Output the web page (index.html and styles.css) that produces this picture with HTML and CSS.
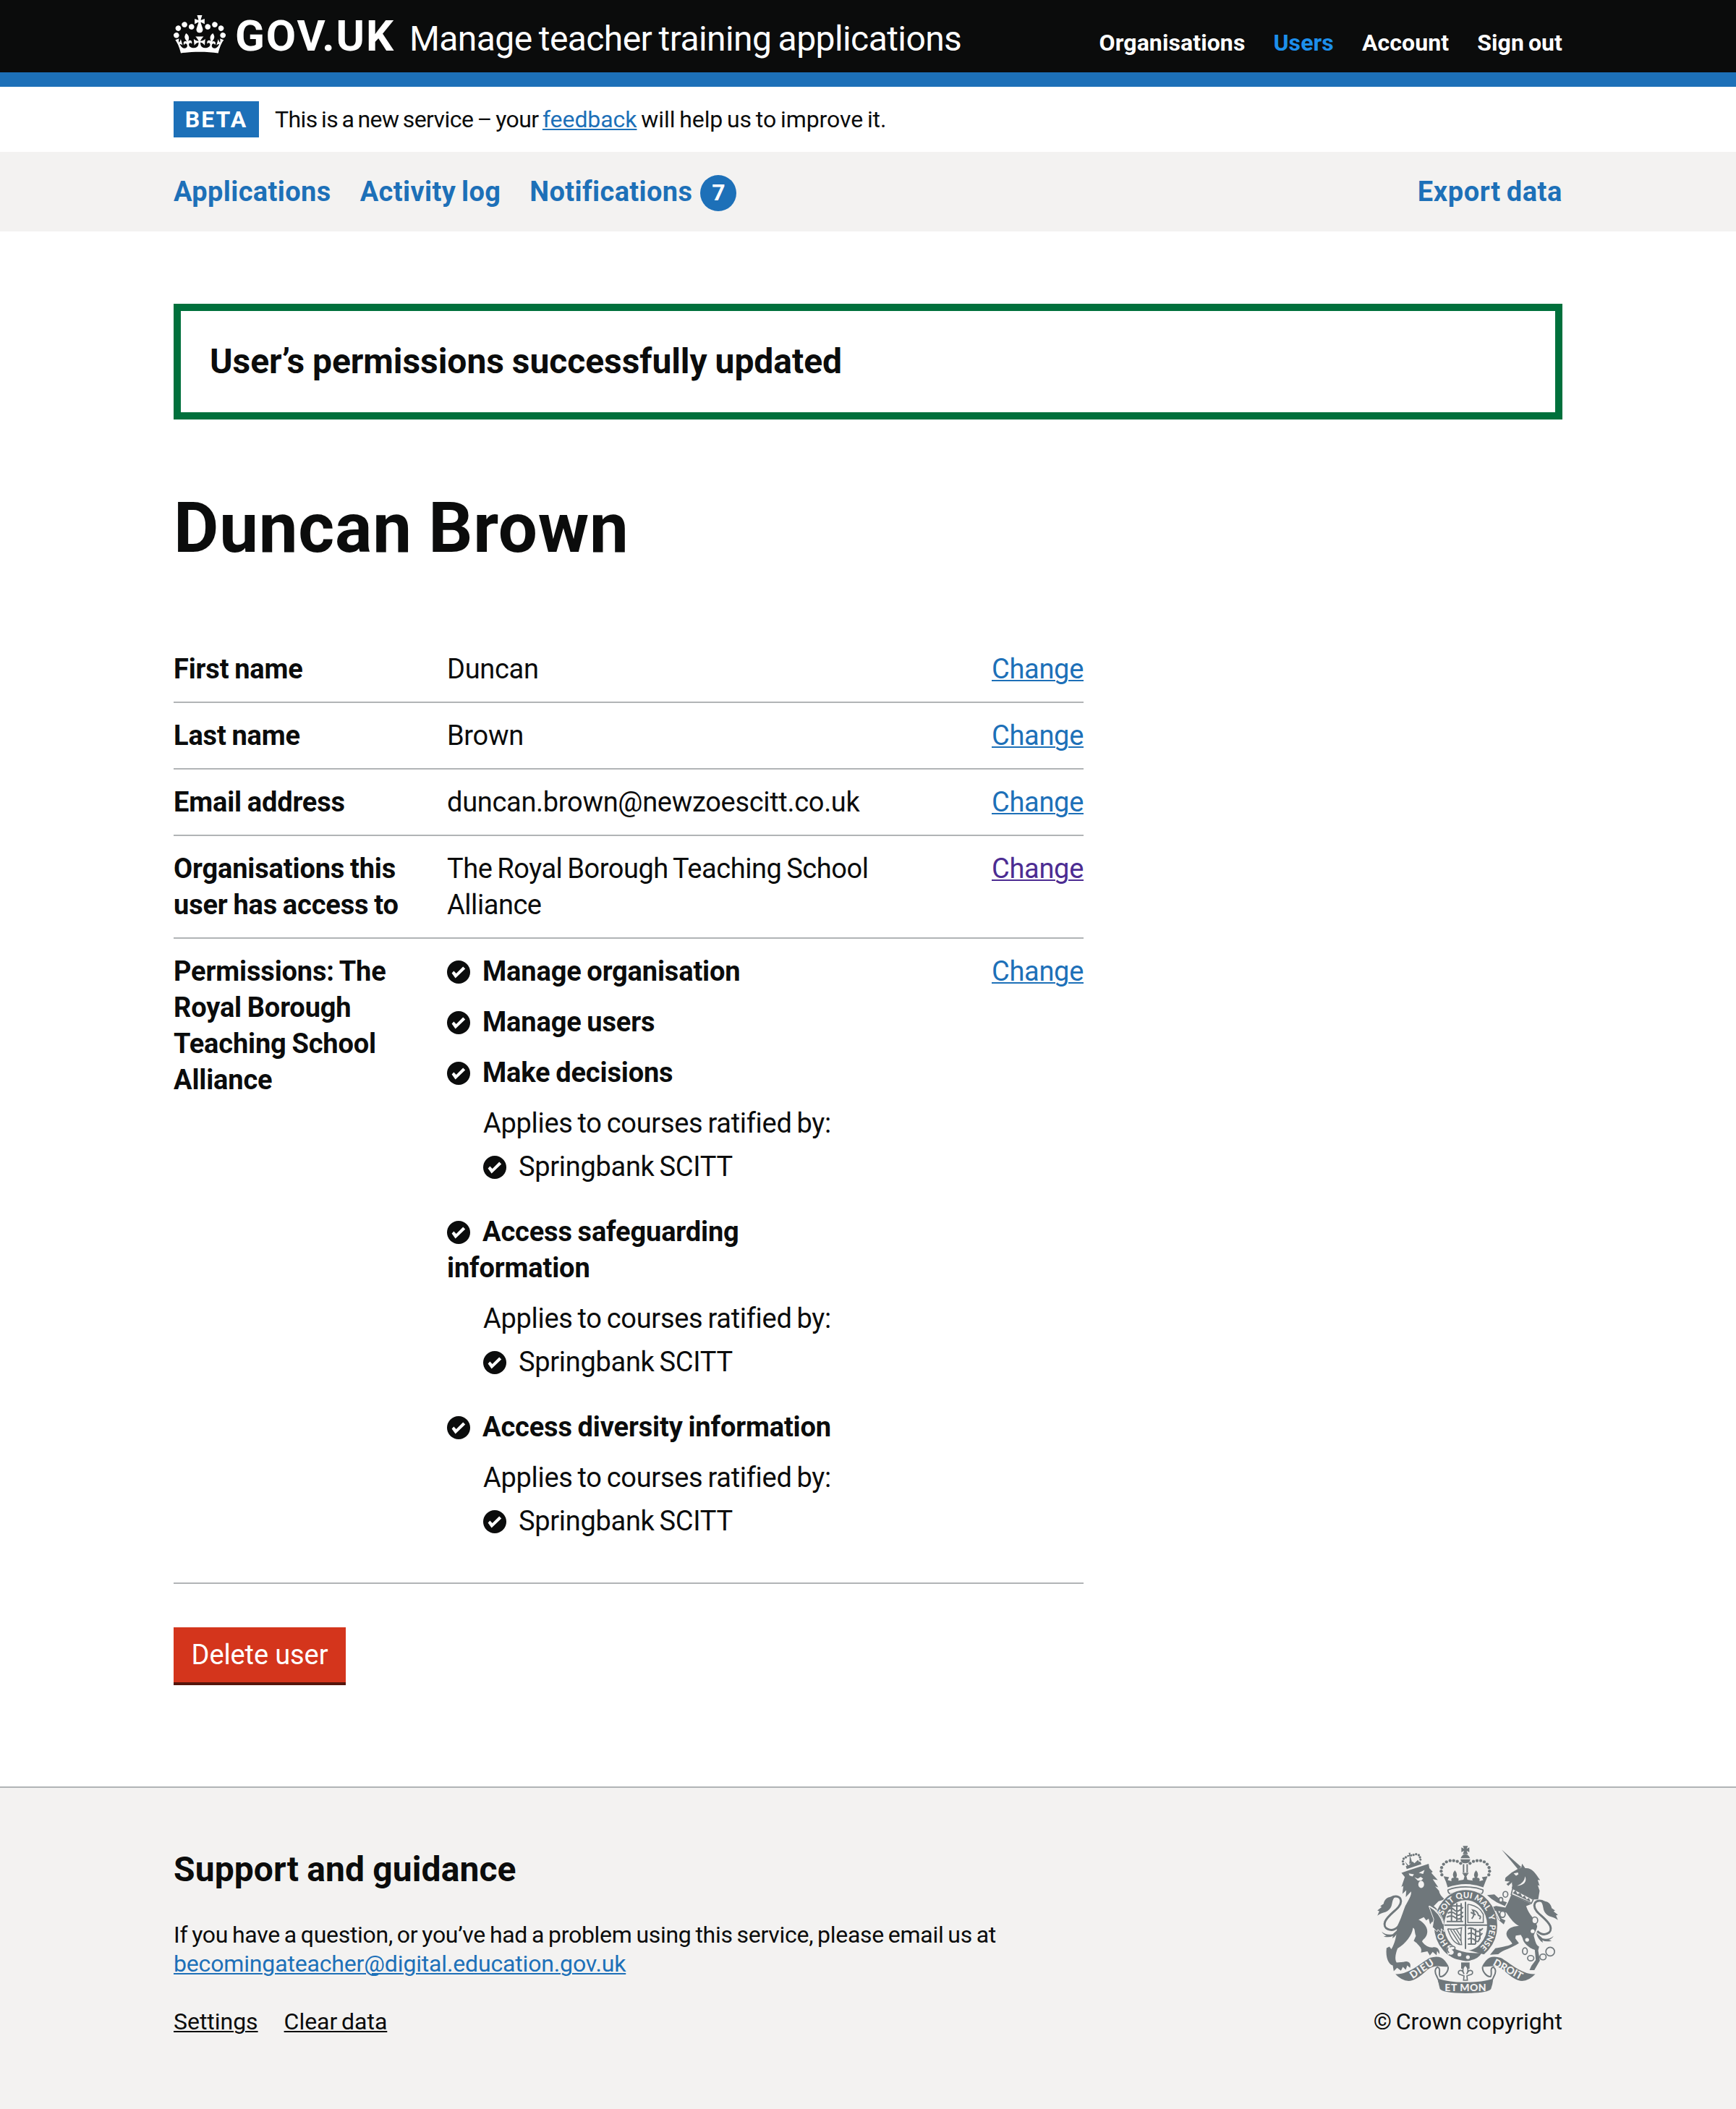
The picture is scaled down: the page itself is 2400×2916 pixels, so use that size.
FILE: index.html
```html
<!DOCTYPE html>
<html lang="en">
<head>
<meta charset="utf-8">
<title>Duncan Brown - Manage teacher training applications - GOV.UK</title>
<link rel="stylesheet" href="styles.css">
</head>
<body>
<svg class="sprite" aria-hidden="true">
  <symbol id="tick" viewBox="0 0 32 32">
    <circle cx="16" cy="16" r="16" fill="#0b0c0c"/>
    <path d="M6.6 17.4 9.4 14.4 12.7 18 22.2 8.6 25.2 11.6 11.6 24.4Z" fill="#fff"/>
  </symbol>
</svg>

<header class="header">
  <div class="container header__inner">
    <div class="header__brand">
      <svg class="header__crown" viewBox="0 0 132 97" aria-hidden="true"><path fill="currentColor" fill-rule="evenodd" d="M25 30.2c3.5 1.5 7.7-.2 9.1-3.7 1.5-3.6-.2-7.8-3.9-9.2-3.6-1.4-7.6.3-9.1 3.9-1.4 3.5.3 7.5 3.9 9zM9 39.5c3.6 1.5 7.8-.2 9.2-3.7 1.5-3.6-.2-7.8-3.9-9.1-3.6-1.5-7.6.2-9.1 3.8-1.4 3.5.3 7.5 3.8 9zM4.4 57.2c3.5 1.5 7.7-.2 9.1-3.8 1.5-3.6-.2-7.7-3.9-9.1-3.5-1.5-7.6.3-9.1 3.8-1.4 3.5.3 7.6 3.9 9.1zm38.3-21.4c3.5 1.5 7.7-.2 9.1-3.8 1.5-3.6-.2-7.7-3.9-9.1-3.6-1.5-7.6.3-9.1 3.8-1.3 3.6.4 7.7 3.9 9.1zm64.4-5.6c-3.6 1.5-7.8-.2-9.1-3.7-1.5-3.6.2-7.8 3.8-9.2 3.6-1.4 7.7.3 9.2 3.9 1.3 3.5-.4 7.5-3.9 9zm15.9 9.3c-3.6 1.5-7.7-.2-9.1-3.7-1.5-3.6.2-7.8 3.7-9.1 3.6-1.5 7.7.2 9.2 3.8 1.5 3.5-.3 7.5-3.8 9zm4.7 17.7c-3.6 1.5-7.8-.2-9.2-3.8-1.5-3.6.2-7.7 3.9-9.1 3.6-1.5 7.7.3 9.2 3.8 1.3 3.5-.4 7.6-3.9 9.1zM89.3 35.8c-3.6 1.5-7.8-.2-9.2-3.8-1.4-3.6.2-7.7 3.9-9.1 3.6-1.5 7.7.3 9.2 3.8 1.4 3.6-.3 7.7-3.9 9.1zM69.7 17.7l8.9 4.7V9.3l-8.9 2.8c-.2-.3-.5-.6-.9-.9L72.4 0H59.6l3.5 11.2c-.3.3-.6.5-.9.9l-8.8-2.8v13.1l8.8-4.7c.3.3.6.7.9.9l-5 15.4v.1c-.2.8-.4 1.6-.4 2.4 0 4.1 3.1 7.5 7 8.1h.2c.3 0 .7.1 1 .1.4 0 .7 0 1-.1h.2c4-.6 7.1-4.1 7.1-8.1 0-.8-.1-1.7-.4-2.4V34l-5.1-15.4c.4-.2.7-.6 1-.9zM66 92.8c16.9 0 32.8 1.1 47.1 3.2 4-16.9 8.9-26.7 14-33.5l-9.6-3.4c1 4.9 1.1 7.2 0 10.2-1.5-1.4-3-4.3-4.2-8.7L108.6 76c2.8-2 5-3.2 7.5-3.3-4.4 9.4-10 11.9-13.6 11.2-4.3-.8-6.3-4.6-5.6-7.9 1-4.7 5.7-5.9 8-.5 4.3-8.7-3-11.4-7.6-8.8 7.1-7.2 7.9-13.5 2.1-21.1-8 6.1-8.1 12.3-4.5 20.8-4.7-5.4-12.1-2.5-9.5 6.2 3.4-5.2 7.9-2 7.2 3.1-.6 4.3-6.4 7.8-13.5 7.2-10.3-.9-10.9-8-11.2-13.8 2.5-.5 7.1 1.8 11 7.3L80.2 60c-4.1 4.4-8 5.3-12.3 5.4 1.4-4.4 8-11.6 8-11.6H55.5s6.4 7.2 7.9 11.6c-4.2-.1-8-1-12.3-5.4l1.4 16.4c3.9-5.5 8.5-7.7 10.9-7.3-.3 5.8-.9 12.8-11.1 13.8-7.2.6-12.9-2.9-13.5-7.2-.7-5 3.8-8.3 7.1-3.1 2.7-8.7-4.6-11.6-9.4-6.2 3.7-8.5 3.6-14.7-4.6-20.8-5.8 7.6-5 13.9 2.2 21.1-4.7-2.6-11.9.1-7.7 8.8 2.3-5.5 7.1-4.2 8.1.5.7 3.3-1.3 7.1-5.7 7.9-3.5.7-9-1.8-13.5-11.2 2.5.1 4.7 1.3 7.5 3.3l-4.7-15.4c-1.2 4.4-2.7 7.2-4.3 8.7-1.1-3-.9-5.3 0-10.2l-9.5 3.4c5 6.9 9.9 16.7 14 33.5 14.8-2.1 30.8-3.2 47.7-3.2z"/></svg>
      <a class="header__logotype" href="#">GOV.UK</a>
      <a class="header__service" href="#">Manage teacher training applications</a>
    </div>
    <nav class="header__nav">
      <a href="#">Organisations</a>
      <a class="is-current" href="#">Users</a>
      <a href="#">Account</a>
      <a href="#">Sign out</a>
    </nav>
  </div>
</header>

<div class="container phase">
  <strong class="phase__tag">BETA</strong>
  <span class="phase__text"><span class="phase__lead">This is a new service – your </span><a class="link" href="#">feedback</a> will help us to improve it.</span>
</div>

<nav class="subnav">
  <div class="container subnav__inner">
    <a href="#">Applications</a>
    <a href="#">Activity log</a>
    <a class="subnav__notify" href="#">Notifications <span class="badge">7</span></a>
    <a class="subnav__end" href="#">Export data</a>
  </div>
</nav>

<main class="container main">
  <div class="success"><h2>User’s permissions successfully updated</h2></div>
  <h1>Duncan Brown</h1>

  <dl class="summary">
    <div class="summary__row"><dt>First name</dt><dd>Duncan</dd><dd class="summary__action"><a class="link" href="#">Change</a></dd></div>
    <div class="summary__row"><dt>Last name</dt><dd>Brown</dd><dd class="summary__action"><a class="link" href="#">Change</a></dd></div>
    <div class="summary__row"><dt>Email address</dt><dd>duncan.brown@newzoescitt.co.uk</dd><dd class="summary__action"><a class="link" href="#">Change</a></dd></div>
    <div class="summary__row"><dt>Organisations this<br>user has access to</dt><dd class="summary__org">The Royal Borough Teaching School Alliance</dd><dd class="summary__action"><a class="link link--visited" href="#">Change</a></dd></div>
    <div class="summary__row">
      <dt>Permissions: The Royal Borough Teaching School Alliance</dt>
      <dd>
        <ul class="perms">
          <li><svg class="tick"><use href="#tick"/></svg><b>Manage organisation</b></li>
          <li><svg class="tick"><use href="#tick"/></svg><b>Manage users</b></li>
          <li><svg class="tick"><use href="#tick"/></svg><b>Make decisions</b>
            <div class="perms__detail"><p>Applies to courses ratified by:</p><p><svg class="tick"><use href="#tick"/></svg>Springbank SCITT</p></div></li>
          <li><svg class="tick"><use href="#tick"/></svg><b>Access safeguarding<br>information</b>
            <div class="perms__detail"><p>Applies to courses ratified by:</p><p><svg class="tick"><use href="#tick"/></svg>Springbank SCITT</p></div></li>
          <li><svg class="tick"><use href="#tick"/></svg><b>Access diversity information</b>
            <div class="perms__detail"><p>Applies to courses ratified by:</p><p><svg class="tick"><use href="#tick"/></svg>Springbank SCITT</p></div></li>
        </ul>
      </dd>
      <dd class="summary__action"><a class="link" href="#">Change</a></dd>
    </div>
  </dl>

  <button class="button" type="button">Delete user</button>
</main>

<footer class="footer">
  <div class="container footer__inner">
    <div class="footer__text">
      <h2>Support and guidance</h2>
      <p>If you have a question, or you’ve had a problem using this service, please email us at<br><a class="link footer__email" href="#">becomingateacher@digital.education.gov.uk</a></p>
      <div class="footer__links"><a href="#">Settings</a><a href="#">Clear data</a></div>
    </div>
    <div class="footer__copyright">
      <svg class="crest" viewBox="132 95 750 613" aria-hidden="true">
        <defs>
          <path id="garter" d="M399 425A100 113 0 0 1 599 425A100 113 0 0 1 399 425"/>
          <g id="tail">
            <path class="ln8" d="M218 432C190 458 152 440 164 410C182 374 230 356 230 325C228 302 204 302 188 312"/>
            <path d="M204 308C180 302 160 316 158 336L144 346 150 350 132 364 140 367 132 386C148 370 172 376 186 354 196 340 190 324 204 308Z"/>
            <path d="M150 452Q168 468 196 462L222 438Q216 466 194 480L197 470Q180 478 158 472L170 468Q156 464 150 452Z"/>
          </g>
          <g id="scroll">
            <path d="M207 628C262 632 312 582 350 561Q392 548 412 572 426 590 428 598L400 597Q368 590 340 610 292 656 262 657 232 655 207 628Z"/>
            <path class="ln5" d="M384 598C368 606 370 624 380 640Q388 654 388 664M384 600C398 606 384 626 392 638 406 642 428 620 426 598"/>
          </g>
        </defs>
        <g class="ink">
          <!-- lion -->
          <path d="M232 208 262 197 345 170 348 188 362 203 356 208 383 238 362 234 385 268 372 264 388 282C390 296 398 306 412 318L386 326 366 346C386 362 404 385 408 425L409 450 397 438 398 456 384 441 380 452 361 433 372 425 360 410 351 422 345 398 335 405 325 392 303 402C325 412 346 438 338 462 332 482 318 484 318 494 330 510 345 518 360 518 380 512 392 525 390 546L380 532 378 550 362 536 350 551 340 534 313 539C320 520 305 512 296 500L283 490 292 470C285 450 290 440 280 436 275 470 250 500 216 522 205 550 205 570 212 580L240 578C260 570 274 582 268 602L256 592 250 610 238 598 230 614 214 602 200 616 196 592C180 590 165 560 170 520L182 514 190 525C205 500 212 470 214 430 230 400 238 370 248 345 262 320 275 300 272 285L250 308 252 280 236 295 240 262 232 266 246 225Z"/>
          <path d="M250 180 310 160 315 172 254 192Z"/>
          <path d="M262 124 270 124 268 132 276 130 276 140 268 138 274 156 276 166 264 170 266 156 266 138 256 142 256 134 264 134ZM246 160 262 178 278 160 286 168 300 154 306 162 258 182Z"/>
          <g><circle cx="238" cy="160" r="5"/><circle cx="241" cy="149" r="5"/><circle cx="250" cy="143" r="5"/><circle cx="240" cy="171" r="5"/><circle cx="282" cy="133" r="5"/><circle cx="293" cy="130" r="5"/><circle cx="304" cy="134" r="5"/><circle cx="309" cy="143" r="5"/><circle cx="311" cy="153" r="4.500"/></g>
          <use href="#tail"/>
          <!-- unicorn -->
          <path d="M648 111 730 184 716 193Z"/>
          <path d="M664 228 690 206 716 191 730 186 733 169 746 188C775 186 788 208 808 238L798 237 806 262 798 258 806 282 800 318 784 318 690 270C696 258 688 252 692 246L676 262 668 254 682 244 662 242Z"/>
          <path d="M688 299 772 337 750 346C762 385 790 400 796 430 793 448 784 455 782 470 788 490 790 508 804 514L800 530 807 572 784 612 764 612 772 594 790 570 786 528C760 518 738 500 735 478L728 465 707 468 705 480 720 500C692 520 652 528 634 546L600 548 622 521C660 515 678 510 692 503 690 490 668 480 668 460 672 440 690 430 720 428 700 418 690 405 668 373L634 366 648 398 664 405 657 422 634 402 618 366 602 352 625 345 664 352 676 328Z"/>
          <path d="M588 300 618 297 646 322 670 330 662 346 628 330 606 316Z"/>
          <use href="#tail" transform="translate(1014 18) scale(-1 1)"/>
          <g class="ring"><ellipse cx="664" cy="297" rx="10" ry="12"/><ellipse cx="645" cy="320" rx="8" ry="10"/><ellipse cx="652" cy="380" rx="11" ry="13"/><ellipse cx="786" cy="405" rx="12" ry="14"/><ellipse cx="745" cy="533" rx="10" ry="14"/><ellipse cx="769" cy="562" rx="13" ry="11"/><ellipse cx="820" cy="557" rx="13" ry="12"/><circle cx="850" cy="535" r="18"/></g>
          <!-- crown over the shield -->
          <path d="M487 96H508L503 108 514 102V122L503 116 508 130H487L492 116 481 122V102L492 108ZM478 147Q484 131 497 131 511 131 517 147ZM477 151H518Q516 168 497 168 479 168 477 151Z"/>
          <path class="ln5" d="M490 172V206M505 172V206"/>
          <g id="arch"><circle cx="400" cy="216" r="6.500"/><circle cx="397" cy="201" r="6.500"/><circle cx="399" cy="186" r="6.500"/><circle cx="407" cy="172" r="6.500"/><circle cx="419" cy="162" r="6.500"/><circle cx="434" cy="157" r="6.500"/><circle cx="449" cy="157" r="6.500"/><circle cx="464" cy="160" r="6.500"/><circle cx="478" cy="168" r="6.500"/></g>
          <use href="#arch" transform="translate(995 0) scale(-1 1)"/>
          <path d="M407 222 430 226 424 238 440 242Q436 226 450 228 440 212 454 197 468 212 459 228 474 226 468 240L490 236 494 222 484 208H512L502 222 506 236 528 240Q522 226 537 228 528 212 542 197 556 212 546 228 560 226 556 242L572 238 566 226 590 222Q580 246 572 268 500 240 424 268 418 244 407 222Z"/>
          <path class="ring" d="M426 278C466 262 530 262 570 278Q574 286 564 296 500 272 434 296 422 286 426 278Z"/>
          <!-- garter and shield -->
          <ellipse class="paper" cx="499" cy="426" rx="133" ry="150"/>
          <ellipse class="garter" cx="499" cy="426" rx="110" ry="126"/>
          <path class="ln5" d="M498 328V524M408 425H590"/>
          <path class="ln5" d="M430 345H484M424 360Q440 348 452 362T488 350M424 376Q440 364 456 378T488 370M420 392Q440 380 456 394T488 386M420 410H488M440 338V410M462 334V408M480 334V410"/>
          <path class="ln3" d="M508 338V414H572V380Q555 345 508 338"/>
          <path class="ln5" d="M524 398Q540 380 528 362 548 366 552 384 566 388 556 400M520 372 540 382"/>
          <path class="ln5" d="M508 440Q524 432 538 446T570 438M508 462Q524 452 538 466T568 458M508 484Q524 474 538 488T556 480M508 504H540M522 436V506M540 440V504M558 440V484"/>
          <path class="ln3" d="M424 440Q452 446 482 436 476 470 482 506 446 508 424 440M436 444 474 504M448 444 478 490M460 442 480 474"/>
          <path class="paper" d="M420 528Q420 500 445 512L580 548Q560 590 470 578L428 560Z"/>
          <path d="M446 520Q500 546 566 540 548 572 500 574 440 566 430 548 444 540 446 520Z"/>
          <path class="ring" d="M432 516C456 506 462 524 446 528 460 538 446 556 428 548M426 518Q418 530 430 540"/>
          <!-- lion's foreleg, in front of the garter -->
          <path class="over" d="M346 346C386 362 404 385 409 425L410 452 397 440 398 458 384 443 380 452 361 433 366 400Z"/>
          <path class="cut2" d="M348 346Q392 372 406 420M622 366 640 404"/>
          <!-- fleur pendant -->
          <path d="M480 580H515V606H480Z"/>
          <path class="ring" d="M497 590Q516 608 503 628 512 606 526 616 532 630 514 632L504 636 506 654H490L492 636 482 632Q464 630 470 616 484 606 492 628 480 608 497 590Z"/>
          <!-- motto scroll -->
          <use href="#scroll"/>
          <use href="#scroll" transform="translate(995 0) scale(-1 1)"/>
          <path d="M385 648Q440 664 498 662 556 664 612 648 612 672 604 690 592 707 498 708 404 707 392 690 385 670 385 648Z"/>
        </g>
        <g class="cut">
          <path d="M262 210 284 214 278 223 266 219ZM304 208 328 196 322 212ZM286 226 300 232 312 224 322 232 314 240 300 240Z"/><ellipse cx="314" cy="256" rx="12" ry="15"/>
          <path d="M698 210 716 206 718 214 708 220Z"/><circle cx="777" cy="450" r="8"/><circle cx="754" cy="486" r="8"/><circle cx="473" cy="547" r="8"/><circle cx="508" cy="558" r="8"/>
          <path d="M712 262Q742 250 746 222 758 256 712 262Z"/>
        </g>
        <path class="ring" d="M694 272 780 318 772 334 688 298Z"/>
        <path class="crest__collar" d="M694 292 706 280 714 296 726 290 734 308 744 302 752 318 762 312 768 328Z"/>
        <g class="motto">
          <text><textPath href="#garter" startOffset="12%" text-anchor="middle">SOIT</textPath></text>
          <text><textPath href="#garter" startOffset="24%" text-anchor="middle">QUI</textPath></text>
          <text><textPath href="#garter" startOffset="35.500%" text-anchor="middle">MAL</textPath></text>
          <text><textPath href="#garter" startOffset="45.500%" text-anchor="middle">Y</textPath></text>
          <text><textPath href="#garter" startOffset="57.500%" text-anchor="middle">PENSE</textPath></text>
          <text><textPath href="#garter" startOffset="91.500%" text-anchor="middle">HO</textPath></text>
          <text class="motto--lg" transform="translate(279 649) rotate(-34)" textLength="110" lengthAdjust="spacing">DIEU</text>
          <text class="motto--lg" x="412" y="699" textLength="172" lengthAdjust="spacing">ET MON</text>
          <text class="motto--lg" transform="translate(610 590) rotate(28)" textLength="132" lengthAdjust="spacing">DROIT</text>
        </g>
      </svg>
      <a class="footer__crown" href="#">© Crown copyright</a>
    </div>
  </div>
</footer>
</body>
</html>
```
FILE: styles.css
```css
* { box-sizing: border-box; }

body {
  margin: 0;
  background: #fff;
  color: #0b0c0c;
  font-family: Roboto, "Liberation Sans", sans-serif;
  font-size: 38px;
  line-height: 50px;
  letter-spacing: -0.008em;
  word-spacing: -0.055em;
}

h1, h2, p, dl, dd, ul { margin: 0; padding: 0; }
a { color: inherit; text-decoration: none; }
b, dt { font-weight: 700; letter-spacing: -0.004em; word-spacing: -0.04em; }

.sprite { position: absolute; width: 0; height: 0; }
.container { width: 1920px; margin: 0 auto; }

.link {
  color: #1d70b8;
  text-decoration: underline;
  text-decoration-thickness: 2px;
  text-underline-offset: 2px;
}
.link--visited { color: #4c2c92; }

/* Header */
.header { height: 120px; background: #0b0c0c; border-bottom: 20px solid #1d70b8; color: #fff; }
.header__inner { display: flex; justify-content: space-between; align-items: baseline; padding-top: 19px; }
.header__brand { display: flex; align-items: baseline; }
.header__crown { align-self: flex-start; width: 72px; height: 53px; margin: 2px 13px 0 0; }
.header__logotype { font-size: 60px; line-height: 61px; font-weight: 700; letter-spacing: 1.9px; margin-right: 20px; }
.header__service { font-size: 48px; line-height: 50px; letter-spacing: -0.012em; }
.header__nav { display: flex; gap: 39px; font-size: 32px; line-height: 40px; font-weight: 700; letter-spacing: 0.003em; }
.header__nav .is-current { color: #1d8feb; }

/* Phase banner */
.phase { display: flex; align-items: center; gap: 22px; height: 90px; font-size: 32px; line-height: 40px; }
.phase__tag { width: 118px; height: 50px; background: #1d70b8; color: #fff; line-height: 50px; text-align: center; letter-spacing: 2px; }
.phase__text { letter-spacing: -0.002em; }
.phase__lead { letter-spacing: -0.018em; }

/* Primary navigation */
.subnav { background: #f3f2f1; color: #1d70b8; font-weight: 700; letter-spacing: 0.01em; }
.subnav__inner { display: flex; gap: 40px; padding: 30px 0; }
.subnav__notify { display: flex; gap: 11px; }
.subnav__end { margin-left: auto; letter-spacing: 0.016em; }
.badge { width: 50px; height: 50px; margin: 2px 0 -2px; border-radius: 50%; background: #1d70b8; color: #fff; font-size: 32px; line-height: 49px; text-align: center; letter-spacing: 0; }

/* Page body */
.main { padding: 100px 0 140px; }
.success { border: 10px solid #00703c; padding: 40px; }
.success h2 { font-size: 48px; line-height: 60px; letter-spacing: -0.001em; word-spacing: -0.02em; }
h1 { margin: 100px 0; font-size: 96px; line-height: 100px; letter-spacing: 0.008em; }

.summary { width: 1258px; margin-bottom: 60px; }
.summary__row { display: grid; grid-template-columns: 338px 590px 1fr; column-gap: 40px; padding: 20px 0; border-bottom: 2px solid #b1b4b6; }
.summary__org { letter-spacing: -0.012em; }
.summary__action { text-align: right; }

.perms { list-style: none; }
.perms li { margin-bottom: 20px; }
.perms li:has(.perms__detail) { margin-bottom: 0; }
.perms__detail { padding: 20px 0 40px 50px; }
.perms__detail p + p { margin-top: 10px; }
.tick { width: 32px; height: 32px; margin-right: 17px; vertical-align: -4px; }

.button {
  display: block;
  width: 238px;
  height: 76px;
  margin-bottom: 4px;
  padding: 0;
  border: 0;
  background: #d4351c;
  box-shadow: 0 4px 0 #55150b;
  color: #fff;
  font: inherit;
  letter-spacing: -0.003em;
  text-align: center;
}

/* Footer */
.footer { background: #f3f2f1; border-top: 2px solid #b1b4b6; font-size: 32px; line-height: 40px; }
.footer__inner { display: flex; justify-content: space-between; align-items: flex-end; padding: 80px 0 101px; }
.footer h2 { margin-bottom: 40px; font-size: 48px; line-height: 60px; letter-spacing: 0.002em; word-spacing: -0.02em; }
.footer__text p { margin-bottom: 40px; letter-spacing: -0.009em; word-spacing: -0.055em; }
.footer .footer__email { letter-spacing: -0.005em; }
.footer__links { display: flex; gap: 36px; letter-spacing: -0.001em; }
.footer__links a { text-decoration: underline; text-decoration-thickness: 2px; text-underline-offset: 2px; }
.footer__copyright { display: flex; flex-direction: column; align-items: flex-end; gap: 19px; }
.footer__crown { letter-spacing: 0.001em; }
.crest { width: 250px; height: 204px; margin-right: 6px; }

.crest .ink, .crest__collar { fill: #6f777b; }
.crest .paper, .crest .cut { fill: #f3f2f1; }
.crest .garter { fill: none; stroke: #6f777b; stroke-width: 42; }
.crest .ln8 { fill: none; stroke: #6f777b; stroke-width: 9; }
.crest .ln5 { fill: none; stroke: #6f777b; stroke-width: 6; }
.crest .ln3 { fill: none; stroke: #6f777b; stroke-width: 4.5; }
.crest .ring { fill: #f3f2f1; stroke: #6f777b; stroke-width: 5; }
.crest .over { stroke: #f3f2f1; stroke-width: 3; }
.crest .cut2 { fill: none; stroke: #f3f2f1; stroke-width: 5; }
.motto { fill: #f3f2f1; font: 900 34px Lato, sans-serif; letter-spacing: 0; word-spacing: 0; }
.motto--lg { font-size: 42px; }
```
